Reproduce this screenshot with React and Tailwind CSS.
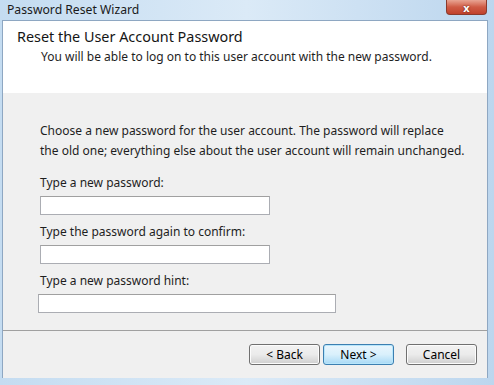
import React from 'react';

const font = { fontFamily: '"Noto Sans", "Open Sans", sans-serif' };

function WizButton({ children, primary }) {
  return (
    <button
      className={
        primary
          ? 'w-[71px] h-[21px] rounded-[3px] border border-[#3c7fb1] bg-gradient-to-b from-[#eaf6fd] via-[#d9f0fc] to-[#a7d9f5] text-[12px] text-black shadow-[inset_0_0_0_1px_#b8e6fb]'
          : 'w-[71px] h-[21px] rounded-[3px] border border-[#707070] bg-gradient-to-b from-[#f2f2f2] via-[#ebebeb] to-[#cfcfcf] text-[12px] text-black shadow-[inset_0_0_0_1px_#fcfcfc]'
      }
    >
      {children}
    </button>
  );
}

function Field({ label, wide }) {
  return (
    <div className="flex flex-col">
      <span className="text-[12px] leading-[16px] text-[#1e1e1e]">{label}</span>
      <div
        className={
          wide
            ? 'mt-[5px] -ml-[2px] h-[19px] w-[298px] border border-[#abadb3] border-t-[#a0a0a0] bg-white'
            : 'mt-[5px] h-[19px] w-[230px] border border-[#abadb3] border-t-[#a0a0a0] bg-white'
        }
      />
    </div>
  );
}

export default function App() {
  return (
    <div
      className="w-[494px] h-[385px] overflow-hidden flex flex-col bg-gradient-to-r from-[#c4dcf1] via-[#dbeaf7] to-[#bcd6ee]"
      style={font}
    >
      {/* title bar */}
      <div className="h-[20px] flex items-start justify-between">
        <span className="pl-[7px] pt-[1px] text-[12.2px] leading-[17px] text-[#1a1a1a]">Password Reset Wizard</span>
        <div className="mr-[7px] w-[41px] h-[15px] rounded-b-[4px] border border-[#8a3a2c] border-t-0 bg-gradient-to-b from-[#e8a493] via-[#cf5b45] to-[#c0412b] flex items-center justify-center">
          <span className="text-[11px] leading-none font-bold text-white [text-shadow:0_0_2px_#5a1a10]">x</span>
        </div>
      </div>

      {/* client area */}
      <div className="ml-[2px] mr-[6px] flex-1 flex flex-col border border-[#8ea7c2] border-b-0">
        <div className="h-[72px] bg-white pl-[14px] pt-[6px]">
          <div className="text-[14.4px] leading-[20px] text-[#151515]">Reset the User Account Password</div>
          <div className="pl-[24px] pt-[2px] text-[12px] leading-[16px] text-[#1e1e1e]">
            You will be able to log on to this user account with the new password.
          </div>
        </div>
        <div className="flex-1 bg-[#f0f0f0] flex flex-col">
          <div className="pl-[37px] pt-[28px] text-[12px] leading-[20px] text-[#1e1e1e]">
            <p>Choose a new password for the user account. The password will replace</p>
            <p>the old one; everything else about the user account will remain unchanged.</p>
          </div>
          <div className="pl-[37px] pt-[14px] flex flex-col gap-[9px]">
            <Field label="Type a new password:" />
            <Field label="Type the password again to confirm:" />
            <Field label="Type a new password hint:" wide />
          </div>
          <div className="mt-auto h-[48px] border-t border-[#a0a0a0] flex items-center justify-end gap-[3px] pr-[10px]">
            <WizButton>&lt; Back</WizButton>
            <WizButton primary>Next &gt;</WizButton>
            <div className="w-[6px]" />
            <WizButton>Cancel</WizButton>
          </div>
        </div>
      </div>
      <div className="h-[7px]" />
    </div>
  );
}
